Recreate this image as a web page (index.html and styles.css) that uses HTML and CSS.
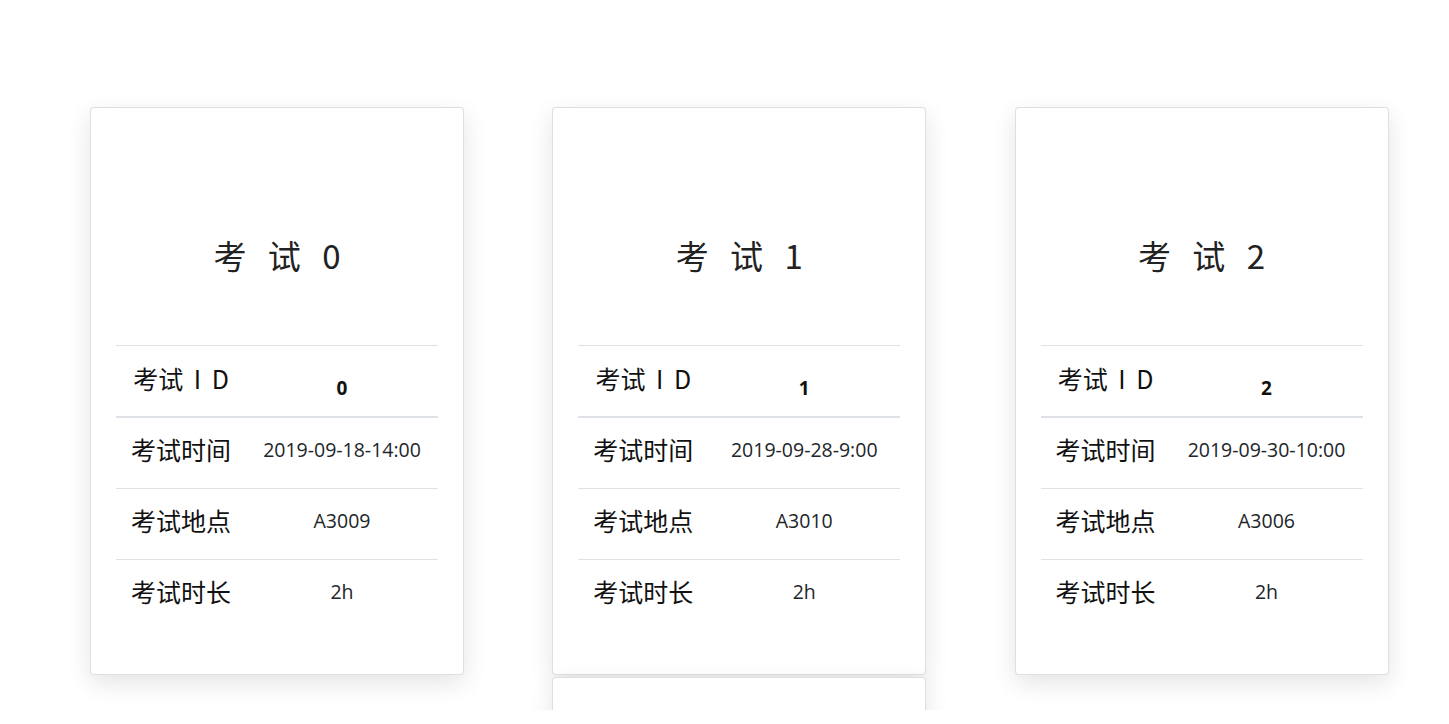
FILE: index.html
```html
<!DOCTYPE html>
<html lang="zh">
<head>
<meta charset="utf-8">
<title>考试</title>
<link rel="stylesheet" href="styles.css">
</head>
<body>
<div class="page">
  <div class="cards">
    <div class="col">
      <div class="card">
        <div class="title">考 试 0</div>
        <table class="info">
          <thead>
            <tr><th class="label">考试 I D</th><th class="val">0</th></tr>
          </thead>
          <tbody>
            <tr><td class="label">考试时间</td><td class="val">2019-09-18-14:00</td></tr>
            <tr><td class="label">考试地点</td><td class="val">A3009</td></tr>
            <tr><td class="label">考试时长</td><td class="val">2h</td></tr>
          </tbody>
        </table>
      </div>
    </div>
    <div class="col">
      <div class="card">
        <div class="title">考 试 1</div>
        <table class="info">
          <thead>
            <tr><th class="label">考试 I D</th><th class="val">1</th></tr>
          </thead>
          <tbody>
            <tr><td class="label">考试时间</td><td class="val">2019-09-28-9:00</td></tr>
            <tr><td class="label">考试地点</td><td class="val">A3010</td></tr>
            <tr><td class="label">考试时长</td><td class="val">2h</td></tr>
          </tbody>
        </table>
      </div>
      <div class="card card-empty"></div>
    </div>
    <div class="col">
      <div class="card">
        <div class="title">考 试 2</div>
        <table class="info">
          <thead>
            <tr><th class="label">考试 I D</th><th class="val">2</th></tr>
          </thead>
          <tbody>
            <tr><td class="label">考试时间</td><td class="val">2019-09-30-10:00</td></tr>
            <tr><td class="label">考试地点</td><td class="val">A3006</td></tr>
            <tr><td class="label">考试时长</td><td class="val">2h</td></tr>
          </tbody>
        </table>
      </div>
    </div>
  </div>
</div>
</body>
</html>
```

FILE: styles.css
```css
html, body {
  margin: 0;
  padding: 0;
  background: #fff;
}
body {
  font-family: "Open Sans", "Noto Sans CJK SC", sans-serif;
  color: #212529;
}
.page {
  height: 710px;
  overflow: hidden;
}
.cards {
  display: flex;
  gap: 88.25px;
  padding: 107px 0 0 90px;
  align-items: flex-start;
}
.col {
  display: flex;
  flex-direction: column;
  gap: 2px;
  width: 374px;
}
.card {
  box-sizing: border-box;
  width: 374px;
  background: #fff;
  border: 1px solid rgba(0, 0, 0, 0.125);
  border-radius: 4px;
  box-shadow: 0 8px 24px rgba(0, 0, 0, 0.11);
  padding: 0 25px 44px;
}
.card-empty {
  height: 300px;
}
.title {
  font-family: "Noto Sans CJK SC", sans-serif;
  font-size: 33px;
  line-height: 50px;
  letter-spacing: 7px;
  text-indent: 7px;
  text-align: center;
  color: #222;
  padding: 122px 0 65px;
}
.info {
  width: 100%;
  border-collapse: collapse;
  table-layout: fixed;
}
.info th, .info td {
  height: 62px;
  padding: 0 0 8px;
  text-align: center;
  vertical-align: middle;
  border-top: 1px solid #dee2e6;
}
.info thead th {
  border-bottom: 2px solid #dee2e6;
}
.info tbody tr:first-child td {
  border-top: 0;
}
.info .label {
  width: 130px;
  font-family: "Noto Sans CJK SC", sans-serif;
  font-size: 25px;
  font-weight: normal;
  color: #111;
}
.info th.label {
  height: 64px;
  padding: 0 0 6px;
  word-spacing: 5px;
}
.info th.val {
  height: 56px;
  font-size: 19px;
  font-weight: bold;
  color: #111;
  padding: 14px 0 0;
}
.info td.val {
  font-size: 19.5px;
}
```
